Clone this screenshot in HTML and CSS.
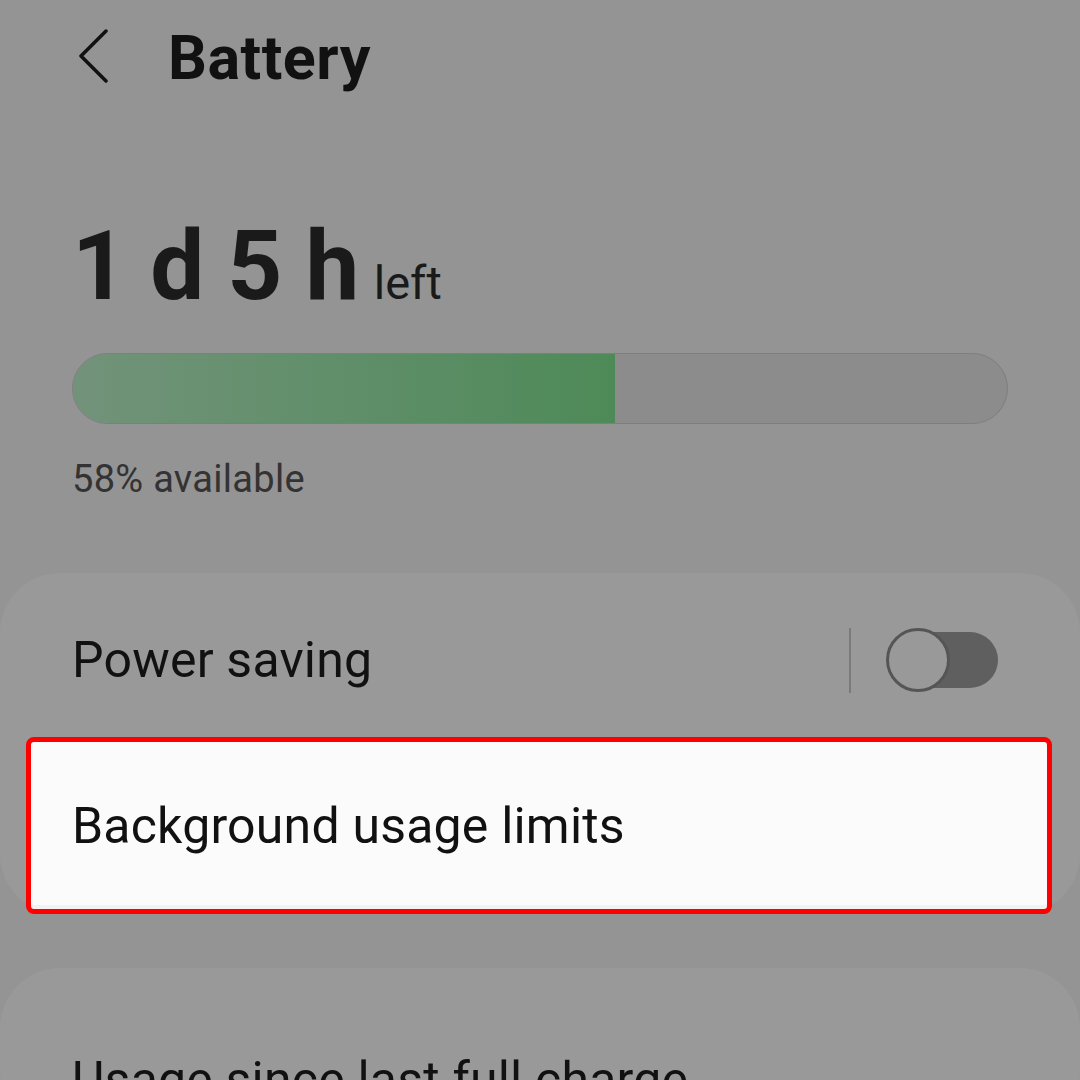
FILE: index.html
```html
<!DOCTYPE html>
<html>
	<head>
		<title>Battery</title>
		<link rel="stylesheet" href="styles.css">
	</head>
	<body>
		<div class="top-bar">
			<svg class="back" width="34" height="56" viewBox="0 0 34 56">
				<path d="M30 4 L5 29 L30 54" fill="none" stroke="#111" stroke-width="3.5" stroke-linecap="round" stroke-linejoin="round"/>
			</svg>
			<h1 class="title">Battery</h1>
		</div>

		<div class="summary">
			<div class="time-left"><span class="big">1 d 5 h</span><span class="small">left</span></div>
			<div class="bar">
				<div class="fill" style="width: 58%"></div>
			</div>
			<div class="available">58% available</div>
		</div>

		<div class="card">
			<div class="row">
				<span class="label">Power saving</span>
				<div class="switch-wrap">
					<span class="divider"></span>
					<span class="switch"><span class="knob"></span></span>
				</div>
			</div>
			<div class="row picked">
				<span class="label">Background usage limits</span>
			</div>
		</div>

		<div class="card">
			<div class="row last">
				<span class="label">Usage since last full charge</span>
			</div>
		</div>
	</body>
</html>
```

FILE: styles.css
```css
body {
	margin: 0;
	background: #949494;
	font-family: Roboto, "Noto Sans", sans-serif;
	color: #111;
	overflow: hidden;
}
.top-bar {
	display: flex;
	align-items: center;
	height: 116px;
	padding-left: 76px;
}
.back {
	margin-top: -6px;
}
.title {
	margin: 0 0 0 58px;
	font-size: 61px;
	font-weight: 700;
	letter-spacing: 0.5px;
}
.summary {
	padding: 95px 72px 0 72px;
}
.time-left {
	display: flex;
	align-items: baseline;
	color: #1a1a1a;
}
.big {
	font-size: 96px;
	font-weight: 700;
	letter-spacing: -0.4px;
	line-height: 110px;
}
.small {
	font-size: 47px;
	margin-left: 15px;
}
.bar {
	margin-top: 32px;
	height: 69px;
	border: 1px solid #7e7e7e;
	border-radius: 36px;
	background: #8c8c8c;
	overflow: hidden;
}
.fill {
	height: 100%;
	background: linear-gradient(to right, #72937a, #4e8a58);
}
.available {
	margin-top: 33px;
	font-size: 38px;
	letter-spacing: 0.3px;
	color: #333;
}
.card {
	margin-top: 72px;
	background: #999999;
	border-radius: 60px;
}
.card + .card {
	margin-top: 54px;
}
.row {
	box-sizing: border-box;
	display: flex;
	align-items: center;
	justify-content: space-between;
	height: 164px;
	padding: 10px 74px 0 72px;
}
.row.last {
	padding-top: 60px;
}
.label {
	font-size: 50px;
	letter-spacing: 0.2px;
	color: #111;
	white-space: nowrap;
}
.switch-wrap {
	display: flex;
	align-items: center;
	gap: 37px;
	margin-right: 8px;
}
.divider {
	width: 2px;
	height: 65px;
	background: #7a7a7a;
}
.switch {
	position: relative;
	width: 110px;
	height: 56px;
	border-radius: 28px;
	background: #5f5f5f;
}
.knob {
	position: absolute;
	left: -2px;
	top: -4px;
	width: 58px;
	height: 58px;
	border-radius: 50%;
	background: #999999;
	border: 3px solid #555555;
}
.picked {
	height: 177px;
	margin: 0 28px 0 26px;
	padding: 0 0 0 41px;
	background: #fbfbfb;
	border: 5px solid #ff0000;
	border-radius: 8px;
	box-shadow: inset 0 -4px 0 #f2f2f2;
}
```
